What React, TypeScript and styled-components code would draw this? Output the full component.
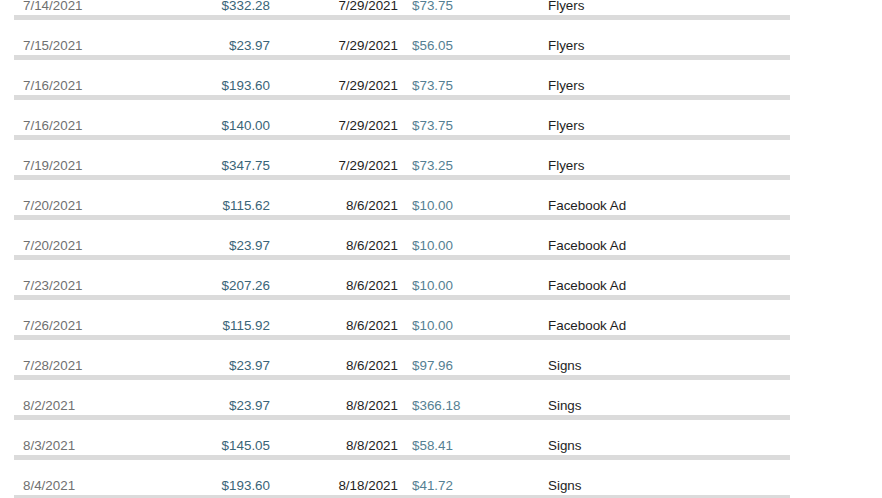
import React from 'react'
import styled, { createGlobalStyle } from 'styled-components'

type Entry = {
  date: string
  amount: string
  paidOn: string
  cost: string
  item: string
}

const rows: Entry[] = [
  { date: '7/14/2021', amount: '$332.28', paidOn: '7/29/2021', cost: '$73.75', item: 'Flyers' },
  { date: '7/15/2021', amount: '$23.97', paidOn: '7/29/2021', cost: '$56.05', item: 'Flyers' },
  { date: '7/16/2021', amount: '$193.60', paidOn: '7/29/2021', cost: '$73.75', item: 'Flyers' },
  { date: '7/16/2021', amount: '$140.00', paidOn: '7/29/2021', cost: '$73.75', item: 'Flyers' },
  { date: '7/19/2021', amount: '$347.75', paidOn: '7/29/2021', cost: '$73.25', item: 'Flyers' },
  { date: '7/20/2021', amount: '$115.62', paidOn: '8/6/2021', cost: '$10.00', item: 'Facebook Ad' },
  { date: '7/20/2021', amount: '$23.97', paidOn: '8/6/2021', cost: '$10.00', item: 'Facebook Ad' },
  { date: '7/23/2021', amount: '$207.26', paidOn: '8/6/2021', cost: '$10.00', item: 'Facebook Ad' },
  { date: '7/26/2021', amount: '$115.92', paidOn: '8/6/2021', cost: '$10.00', item: 'Facebook Ad' },
  { date: '7/28/2021', amount: '$23.97', paidOn: '8/6/2021', cost: '$97.96', item: 'Signs' },
  { date: '8/2/2021', amount: '$23.97', paidOn: '8/8/2021', cost: '$366.18', item: 'Sings' },
  { date: '8/3/2021', amount: '$145.05', paidOn: '8/8/2021', cost: '$58.41', item: 'Signs' },
  { date: '8/4/2021', amount: '$193.60', paidOn: '8/18/2021', cost: '$41.72', item: 'Signs' },
]

const GlobalStyle = createGlobalStyle`
  html, body {
    margin: 0;
    padding: 0;
    background: #ffffff;
    overflow: hidden;
  }
  body {
    font-family: 'Liberation Sans', Arial, sans-serif;
  }
`

const App = () => (
  <>
    <GlobalStyle />
    <Ledger>
      {rows.map((r, i) => (
        <Row key={i}>
          <Cells>
            <Cell tone="muted">{r.date}</Cell>
            <Cell tone="money" align="right">{r.amount}</Cell>
            <Cell tone="ink" align="right">{r.paidOn}</Cell>
            <Cell tone="light" indent>{r.cost}</Cell>
            <Cell tone="ink">{r.item}</Cell>
          </Cells>
          <Divider />
        </Row>
      ))}
    </Ledger>
  </>
)

const Ledger = styled.div`
  margin-top: -20px;
  padding-left: 14px;
  width: 776px;
  display: flex;
  flex-direction: column;
`

const Row = styled.div`
  height: 40px;
  padding-top: 18px;
  box-sizing: border-box;
  display: flex;
  flex-direction: column;
`

const Cells = styled.div`
  display: grid;
  grid-template-columns: 127px 120px 128px 150px 1fr;
  padding-left: 9px;
  font-size: 13.4px;
  line-height: 16px;
  height: 16px;
`

const colours = {
  muted: '#707070',
  money: '#3a6477',
  ink: '#1e1e1e',
  light: '#557f93',
}

const Cell = styled.span<{ tone: keyof typeof colours; align?: 'left' | 'right'; indent?: boolean }>`
  color: ${({ tone }) => colours[tone]};
  text-align: ${({ align }) => align || 'left'};
  padding-left: ${({ indent }) => (indent ? '14px' : '0')};
  white-space: nowrap;
`

const Divider = styled.div`
  margin-top: 1px;
  height: 5px;
  background: #dbdbdb;
`

export default App
